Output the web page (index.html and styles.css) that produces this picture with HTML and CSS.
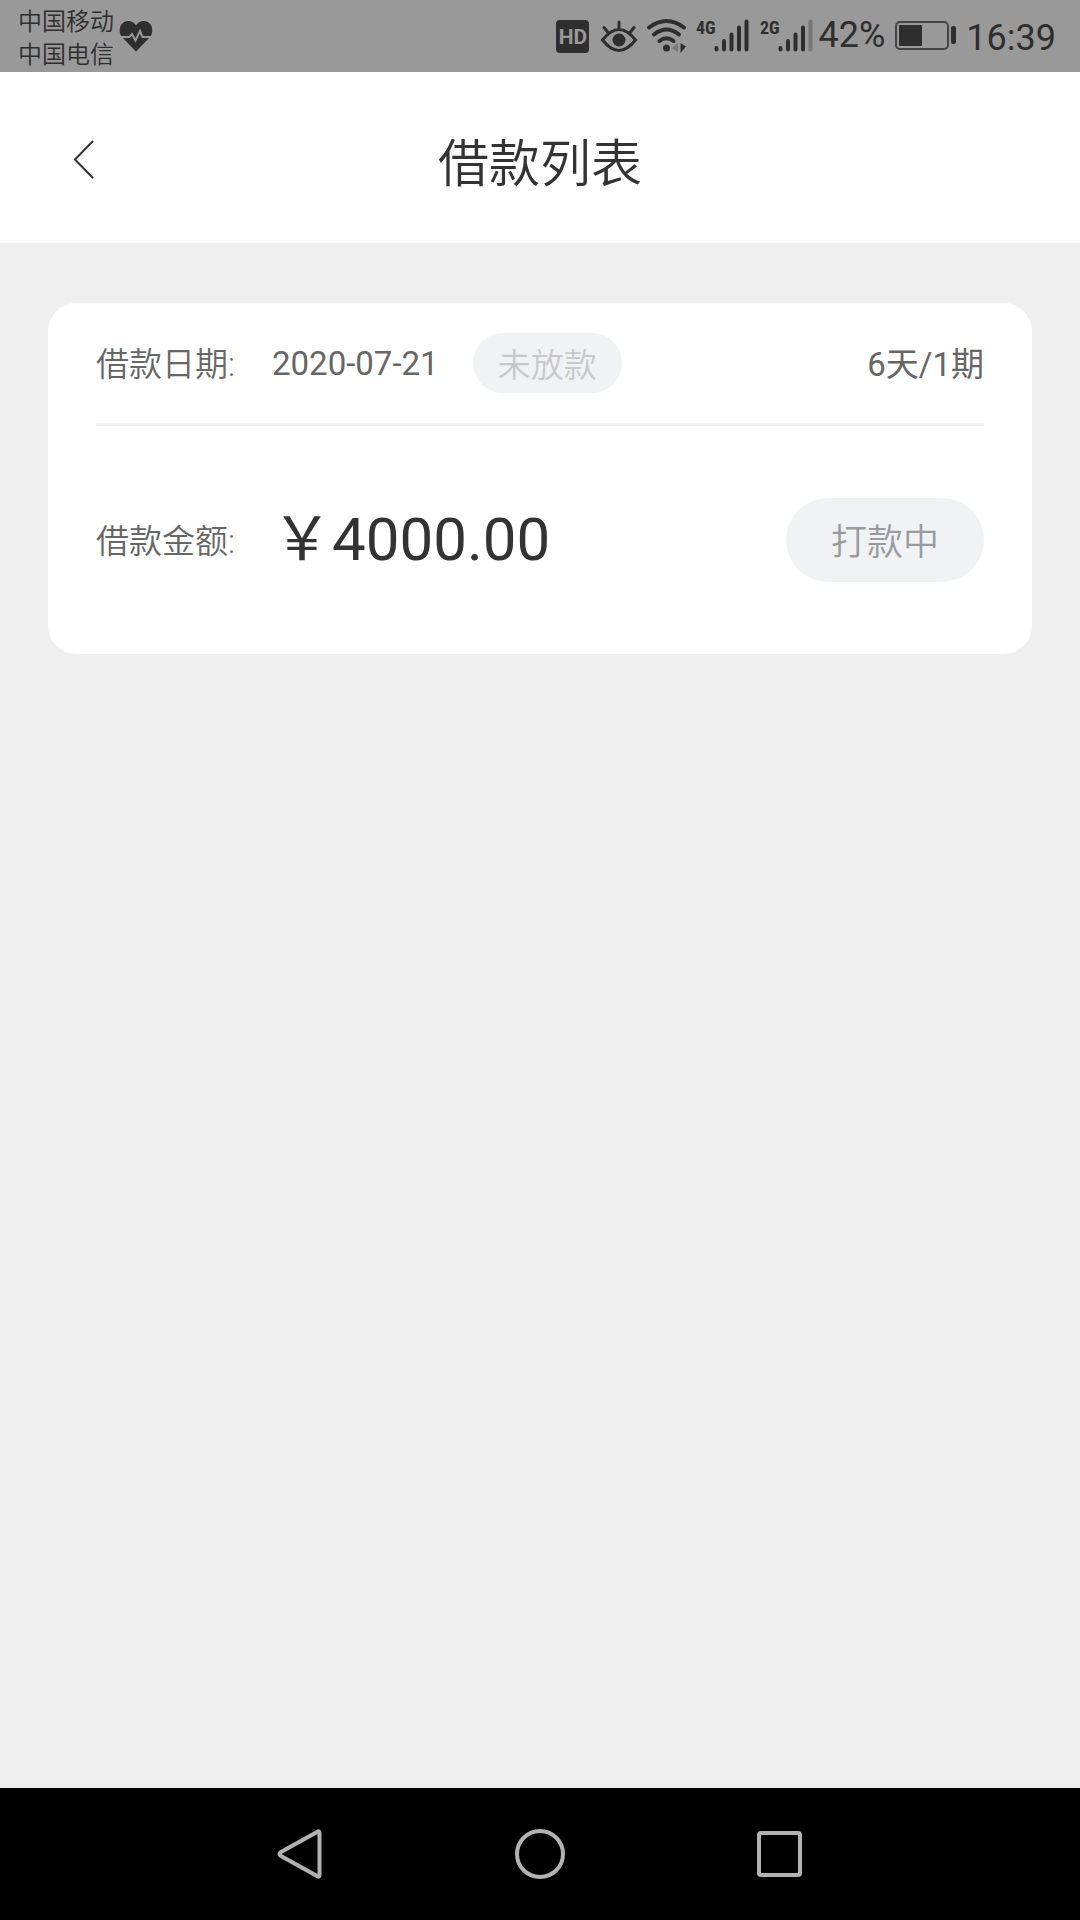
FILE: index.html
```html
<!DOCTYPE html>
<html lang="zh-CN">
<head>
<meta charset="utf-8">
<meta name="viewport" content="width=device-width, initial-scale=1">
<title>借款列表</title>
<link rel="stylesheet" href="styles.css">
</head>
<body>
<div class="status-bar">
  <div class="carriers"><span>中国移动</span><span>中国电信</span></div>
  <svg class="heart" width="34" height="36" viewBox="0 0 34 36" aria-hidden="true">
    <path class="ink" d="M17 33.500L2.500 18.500C-1.500 13 1 3 9 3C13 3 15.500 5 17 7.500C18.500 5 21 3 25 3C33 3 35.500 13 31.500 18.500Z"/>
    <path class="cut" d="M0 19H10.500L13 16L16.500 22.500L21 13L23.500 19H34"/>
  </svg>
  <div class="indicators">
    <svg width="35" height="36" viewBox="0 0 35 36" aria-label="HD">
      <rect class="ink" y="2" width="33" height="33" rx="4"/>
      <text class="hd" x="17" y="26" text-anchor="middle">HD</text>
    </svg>
    <svg width="36" height="36" viewBox="0 0 36 36" aria-hidden="true">
      <path class="line" d="M1.500 22Q18 1 34.500 22Q18 43 1.500 22ZM18 4V11M3 9.500L7 14.500M33 9.500L29 14.500"/>
      <circle class="ink" cx="18" cy="22" r="6.500"/>
    </svg>
    <svg width="39" height="36" viewBox="0 0 39 36" aria-hidden="true">
      <path class="line wave" d="M2 9.500Q19.500-3.500 37 9.500M7 16.500Q19.500 6.500 32 16.500M12.500 23Q19.500 17.500 26.500 23"/>
      <circle class="ink" cx="19.500" cy="30" r="3.500"/>
      <path class="faint" d="M31 25V34L25 30Z"/>
      <path class="ink" d="M33.500 25V35L39 28.500Z"/>
    </svg>
    <svg width="54" height="36" viewBox="0 0 54 36" aria-label="4G">
      <text class="net" x="0" y="16">4G</text>
      <path class="bars" d="M20.500 30V31.500M28 23V31.500M35.500 16.500V31.500M43 9.500V31.500M50.500 3.500V31.500"/>
    </svg>
    <svg width="53" height="36" viewBox="0 0 53 36" aria-label="2G">
      <text class="net" x="0" y="16">2G</text>
      <path class="bars" d="M20.500 30V31.500M28 23V31.500M35.500 16.500V31.500M43 9.500V31.500"/>
      <path class="bars bars-off" d="M50.500 3.500V31.500"/>
    </svg>
    <span class="percent">42%</span>
    <svg width="61" height="36" viewBox="0 0 61 36" aria-hidden="true">
      <rect class="case" x="1" y="4" width="52" height="27" rx="4"/>
      <rect class="ink" x="4" y="7" width="23" height="21" rx="1"/>
      <rect class="ink" x="56" y="8" width="5" height="18" rx="2"/>
    </svg>
    <span class="clock">16:39</span>
  </div>
</div>

<header class="header">
  <button class="back" type="button" aria-label="返回">
    <svg width="24" height="42" viewBox="0 0 24 42" aria-hidden="true"><path d="M21 3L3 21.500L21 40"/></svg>
  </button>
  <h1 class="title">借款列表</h1>
</header>

<main class="content">
  <article class="card">
    <div class="row row-date">
      <span class="label">借款日期:</span>
      <time class="date" datetime="2020-07-21">2020-07-21</time>
      <span class="tag">未放款</span>
      <span class="term">6天/1期</span>
    </div>
    <div class="row row-amount">
      <span class="label">借款金额:</span>
      <strong class="amount">￥4000.00</strong>
      <button class="state" type="button">打款中</button>
    </div>
  </article>
</main>

<nav class="nav-bar" aria-label="系统导航">
  <button class="nav-button" type="button" aria-label="返回">
    <svg width="52" height="52" viewBox="0 0 52 52" aria-hidden="true"><path d="M43 4Q45.500 2 45.500 5V47Q45.500 50 43 48L7 28Q4 26 7 24Z"/></svg>
  </button>
  <button class="nav-button" type="button" aria-label="主页">
    <svg width="52" height="52" viewBox="0 0 52 52" aria-hidden="true"><circle cx="26" cy="26" r="23"/></svg>
  </button>
  <button class="nav-button" type="button" aria-label="最近任务">
    <svg width="52" height="52" viewBox="0 0 52 52" aria-hidden="true"><rect x="5" y="5" width="41" height="42" rx="2"/></svg>
  </button>
</nav>
</body>
</html>
```
FILE: styles.css
```css
* {
  box-sizing: border-box;
}

body {
  display: flex;
  flex-direction: column;
  min-height: 100vh;
  margin: 0;
  background: #efefef;
  color: #666;
  font-family: Roboto, "Noto Sans CJK SC", sans-serif;
  font-size: 33px;
  line-height: 48px;
}

button {
  border: 0;
  padding: 0;
  background: none;
  color: inherit;
  font: inherit;
}

svg {
  display: block;
  flex: none;
  overflow: visible;
}

/* System status bar */
.status-bar {
  display: flex;
  align-items: center;
  height: 72px;
  padding: 0 24px 0 18px;
  background: #999;
  color: #2e2e2e;
}

.carriers {
  display: flex;
  flex-direction: column;
  padding-top: 6px;
  font-size: 24px;
  font-weight: 350;
  line-height: 33px;
}

.heart {
  margin-left: 5px;
}

.indicators {
  display: flex;
  align-items: center;
  gap: 10px;
  margin-left: auto;
  font-size: 36px;
}

.percent {
  margin: 0 0 2px -4px;
}

.clock {
  margin-top: 4px;
}

.ink {
  fill: #2e2e2e;
}

.faint {
  fill: #777;
}

.cut {
  fill: none;
  stroke: #999;
  stroke-width: 2;
}

.line {
  fill: none;
  stroke: #2e2e2e;
  stroke-width: 3;
  stroke-linecap: round;
}

.wave {
  stroke-width: 4;
}

.bars {
  fill: none;
  stroke: #2e2e2e;
  stroke-width: 4;
  stroke-linecap: round;
}

.bars-off {
  stroke: #777;
}

.case {
  fill: none;
  stroke: #444;
  stroke-width: 2;
}

.hd {
  fill: #999;
  font-size: 21px;
  font-weight: 700;
}

.net {
  fill: #2e2e2e;
  font-family: "Roboto Condensed", "Liberation Sans Narrow", Roboto, sans-serif;
  font-size: 18px;
  font-weight: 700;
}

/* Page header */
.header {
  display: grid;
  grid-template-columns: 96px 1fr 96px;
  align-items: center;
  height: 171px;
  padding-top: 2px;
  background: #fff;
  color: #333;
}

.back {
  display: flex;
  justify-content: flex-end;
}

.back svg {
  fill: none;
  stroke: #333;
  stroke-width: 2;
}

.title {
  margin: 0;
  padding-top: 12px;
  font-size: 51px;
  font-weight: 350;
  line-height: 72px;
  text-align: center;
}

/* Loan list */
.content {
  flex: 1;
  padding: 60px 48px;
}

.card {
  padding: 0 48px;
  border-radius: 28px;
  background: #fff;
}

.row {
  display: flex;
  align-items: center;
}

.row-date {
  padding: 30px 0;
  border-bottom: 3px solid #efefef;
}

.row-amount {
  padding: 72px 0;
}

.label {
  width: 176px;
  padding-top: 4px;
  font-weight: 350;
}

.date {
  padding-top: 2px;
}

.tag {
  margin-left: 34px;
  padding: 9px 25px 3px;
  border-radius: 30px;
  background: #f1f2f4;
  color: #c8c8c8;
  font-weight: 350;
}

.term {
  margin-left: auto;
  padding-top: 3px;
}

.amount {
  color: #333;
  font-size: 60px;
  font-weight: 400;
  line-height: 84px;
}

.state {
  margin-left: auto;
  padding: 6px 45px 0;
  border-radius: 42px;
  background: #f1f2f4;
  color: #9a9aa2;
  font-size: 36px;
  font-weight: 350;
  line-height: 78px;
}

/* System navigation bar */
.nav-bar {
  display: flex;
  justify-content: center;
  gap: 188px;
  padding: 40px 0;
  background: #000;
}

.nav-button svg {
  fill: none;
  stroke: #b2b2b2;
  stroke-width: 4;
}
```
